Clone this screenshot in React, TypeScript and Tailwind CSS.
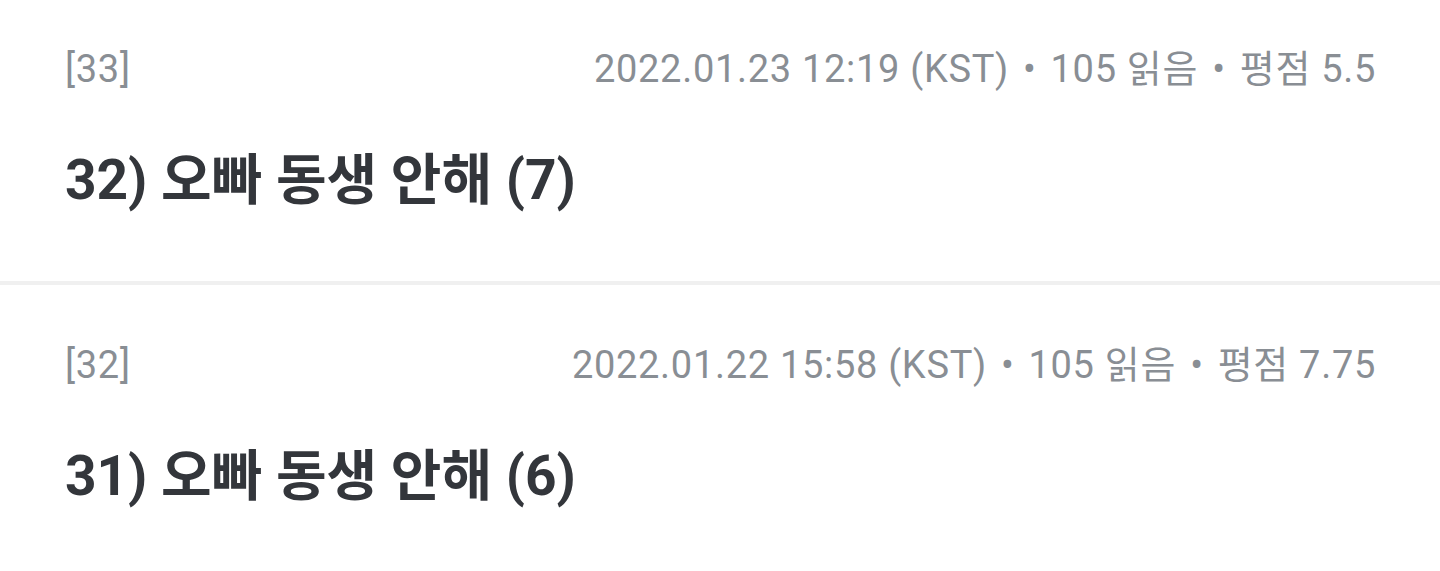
import React from "react";

const items = [
  { no: "[33]", date: "2022.01.23 12:19 (KST)", reads: "105 읽음", score: "평점 5.5", title: "32) 오빠 동생 안해 (7)" },
  { no: "[32]", date: "2022.01.22 15:58 (KST)", reads: "105 읽음", score: "평점 7.75", title: "31) 오빠 동생 안해 (6)" },
];

function Dot() {
  return <span className="mx-[14px]">•</span>;
}

export default function App() {
  return (
    <div
      className="w-full h-[571px] overflow-hidden bg-white"
      style={{ fontFamily: 'Roboto, "Noto Sans CJK KR", sans-serif' }}
    >
      <div className="-mt-[11px] flex flex-col">
        {items.map((it, i) => (
          <div key={i} className="flex flex-col">
            {i > 0 && <div className="h-[4px] bg-[#f0f0f0]" />}
            <div className="pl-[65px] pr-[64px] pt-[58px] pb-[69px]">
              <div className="flex justify-between text-[38px] leading-[44px] tracking-[0.7px] text-[#898e94]">
                <span>{it.no}</span>
                <span className="whitespace-nowrap">
                  {it.date}
                  <Dot />
                  {it.reads}
                  <Dot />
                  {it.score}
                </span>
              </div>
              <div className="mt-[57px] text-[55px] leading-[64px] font-bold text-[#33363b]">
                {it.title}
              </div>
            </div>
          </div>
        ))}
      </div>
    </div>
  );
}
